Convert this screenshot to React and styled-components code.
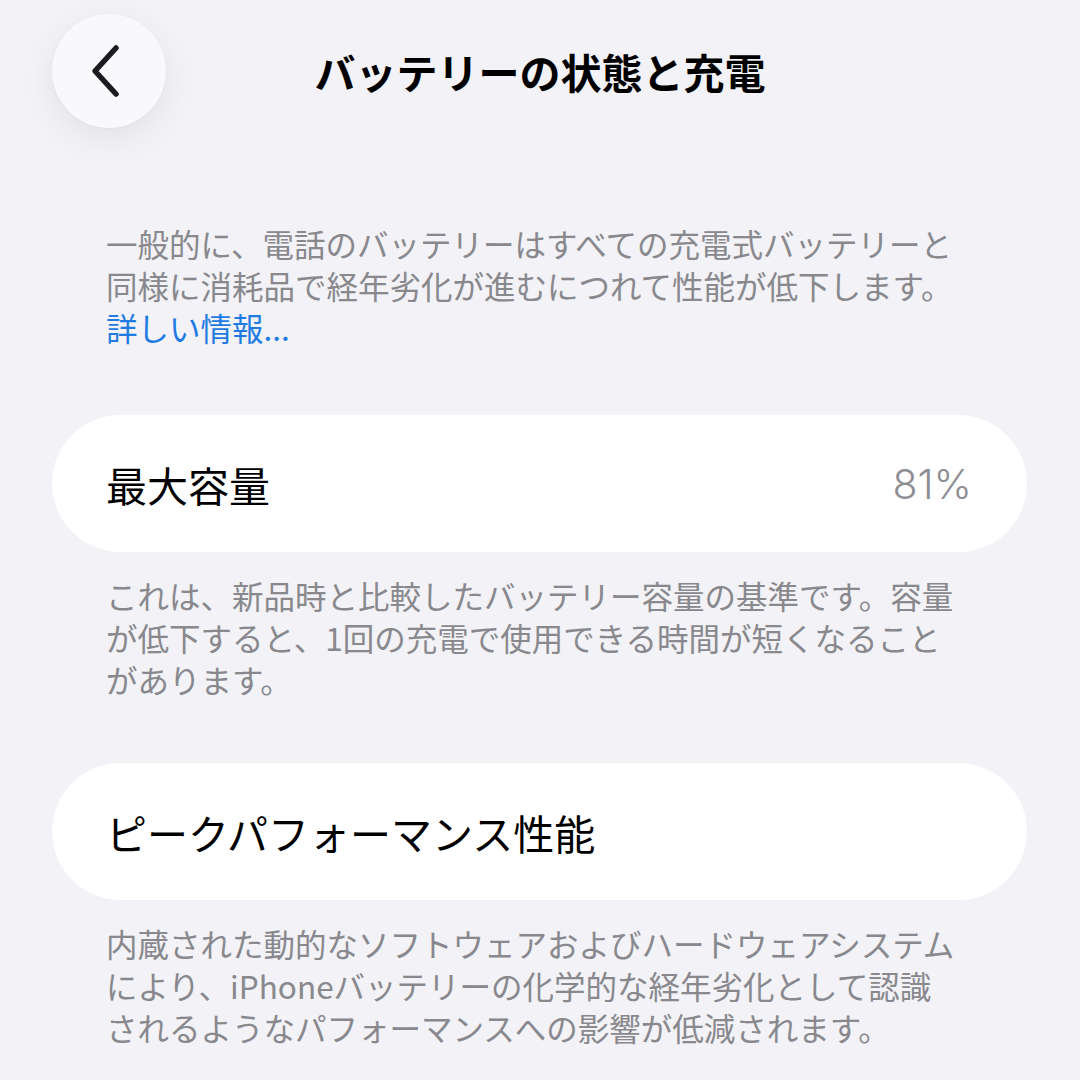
import styled, { createGlobalStyle } from 'styled-components';

const GlobalStyle = createGlobalStyle`
  html, body {
    margin: 0;
    padding: 0;
    background: #f2f2f7;
  }
  body {
    font-family: 'Noto Sans CJK JP', 'Noto Sans', sans-serif;
    -webkit-font-smoothing: antialiased;
  }
`;

function App() {
  return (
    <>
      <GlobalStyle />
      <Page>
        <Header>
          <BackButton aria-label="戻る">
            <svg width="40" height="56" viewBox="0 0 40 56" fill="none">
              <path
                d="M30 5 L9 28 L30 51"
                stroke="#1c1c1e"
                strokeWidth="5.5"
                strokeLinecap="round"
                strokeLinejoin="round"
              />
            </svg>
          </BackButton>
          <Title>バッテリーの状態と充電</Title>
        </Header>

        <Content>
          <Note $top={94}>
            一般的に、電話のバッテリーはすべての充電式バッテリーと
            <br />
            同様に消耗品で経年劣化が進むにつれて性能が低下します。
            <br />
            <MoreLink href="#">詳しい情報...</MoreLink>
          </Note>

          <Card $top={67}>
            <Label>最大容量</Label>
            <Value>81%</Value>
          </Card>
          <Note $top={22}>
            これは、新品時と比較したバッテリー容量の基準です。容量
            <br />
            が低下すると、1回の充電で使用できる時間が短くなること
            <br />
            があります。
          </Note>

          <Card $top={63}>
            <Label>ピークパフォーマンス性能</Label>
          </Card>
          <Note $top={22}>
            内蔵された動的なソフトウェアおよびハードウェアシステム
            <br />
            により、iPhoneバッテリーの化学的な経年劣化として認識
            <br />
            されるようなパフォーマンスへの影響が低減されます。
          </Note>
        </Content>
      </Page>
    </>
  );
}

const Page = styled.div`
  width: 1080px;
  height: 1080px;
  overflow: hidden;
  background: #f2f2f7;
`;

const Header = styled.header`
  display: grid;
  grid-template-columns: 1fr auto 1fr;
  align-items: center;
  padding: 14px 52px 0;
`;

const BackButton = styled.button`
  width: 114px;
  height: 114px;
  border-radius: 50%;
  border: none;
  background: #f9f9fb;
  box-shadow: 0 10px 34px rgba(0, 0, 0, 0.07), 0 1px 3px rgba(0, 0, 0, 0.03);
  display: flex;
  align-items: center;
  justify-content: center;
  padding: 0 6px 0 0;
  cursor: pointer;
`;

const Title = styled.h1`
  margin: 0;
  font-size: 41px;
  font-weight: 700;
  color: #000;
  white-space: nowrap;
`;

const Content = styled.main`
  padding: 0 53px 0 52px;
  display: flex;
  flex-direction: column;
`;

const Note = styled.p`
  margin: ${(p) => p.$top}px 0 0;
  padding: 0 0 0 54px;
  font-size: 31.5px;
  line-height: 42px;
  color: #88888d;
  white-space: nowrap;
`;

const MoreLink = styled.a`
  color: #1f7be2;
  text-decoration: none;
`;

const Card = styled.section`
  margin-top: ${(p) => p.$top}px;
  height: 137px;
  border-radius: 69px;
  background: #fff;
  display: flex;
  align-items: center;
  justify-content: space-between;
  padding: 0 55px 0 54px;
  box-sizing: border-box;
`;

const Label = styled.span`
  font-size: 41px;
  color: #000;
`;

const Value = styled.span`
  font-family: 'Inter', 'Noto Sans', sans-serif;
  font-size: 41px;
  font-weight: 300;
  color: #8e8e93;
`;

export default App;
